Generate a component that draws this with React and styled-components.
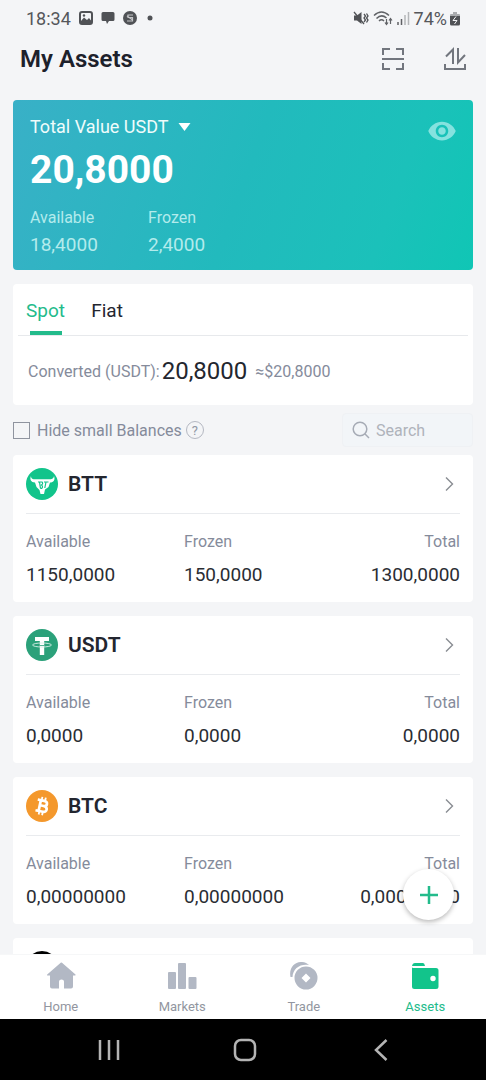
import React, { useState } from 'react';
import styled, { createGlobalStyle } from 'styled-components';

const GlobalStyle = createGlobalStyle`
  * {
    box-sizing: border-box;
  }
  body {
    margin: 0;
    background: #f4f5f7;
    font-family: Roboto, "Liberation Sans", sans-serif;
    color: #23262f;
  }
  button, input {
    font-family: inherit;
    color: inherit;
  }
  button {
    display: flex;
    align-items: center;
    padding: 0;
    border: 0;
    background: none;
    cursor: pointer;
  }
  svg {
    display: block;
    flex-shrink: 0;
  }
`;

const Screen = styled.div`
  display: flex;
  flex-direction: column;
  height: 100vh;
  overflow: hidden;
  background: #f4f5f7;
`;

const StatusBar = styled.div`
  display: flex;
  justify-content: space-between;
  align-items: center;
  height: 36px;
  padding: 0 26px;
  font-size: 18px;
  color: #55575b;
`;

const StatusGroup = styled.div`
  display: flex;
  align-items: center;
  gap: ${({ $gap }) => $gap};
`;

const Header = styled.header`
  display: flex;
  justify-content: space-between;
  align-items: center;
  height: 46px;
  padding: 0 19px 0 20px;
`;

const Title = styled.h1`
  margin: 0;
  font-size: 24px;
  line-height: 28px;
  font-weight: 600;
  color: #1d212b;
`;

const HeaderActions = styled.div`
  display: flex;
  gap: 38px;
  color: #72767e;
`;

const Content = styled.main`
  flex: 1;
  min-height: 0;
  overflow-y: auto;
  padding: 18px 13px 0;
  scrollbar-width: none;
`;

const TotalCard = styled.section`
  display: flex;
  justify-content: space-between;
  align-items: flex-start;
  height: 170px;
  padding: 15px 16px 0 17px;
  border-radius: 4px;
  background: linear-gradient(110deg, #39b0c7 0%, #22babd 50%, #1bc1ba 80%, #10c6b5 100%);
  color: #fff;
`;

const TotalLabel = styled.button`
  gap: 9px;
  font-size: 18px;
  line-height: 24px;
  && {
    color: #effcfb;
  }
`;

const TotalValue = styled.div`
  margin-top: 7px;
  font-size: 39px;
  line-height: 48px;
  font-weight: 700;
`;

const TotalStats = styled.dl`
  display: grid;
  grid-template-columns: 118px auto;
  margin: 12px 0 0;
  color: #b3ebec;
`;

const TotalStat = styled.div`
  dt {
    font-size: 16px;
    line-height: 24px;
  }
  dd {
    margin: 1px 0 0;
    font-size: 19px;
    line-height: 28px;
  }
`;

const EyeButton = styled.button`
  margin-top: 1px;
  && {
    color: #85e2df;
  }
`;

const Panel = styled.section`
  margin-top: 14px;
  height: 121px;
  padding: 0 5px;
  border-radius: 4px;
  background: #fff;
`;

const Tabs = styled.div`
  display: flex;
  gap: 26px;
  height: 52px;
  padding: 0 8px;
  border-bottom: 1px solid #e7e9ec;
`;

const Tab = styled.button`
  flex-direction: column;
  justify-content: space-between;
  padding-top: 14px;
  font-size: 19px;
  line-height: 26px;
  && {
    color: ${({ $active }) => ($active ? '#23bb8b' : '#23262f')};
  }
  &::after {
    content: '';
    width: 32px;
    height: 4px;
    background: ${({ $active }) => ($active ? '#23bb8b' : 'transparent')};
  }
`;

const Converted = styled.div`
  display: flex;
  align-items: center;
  height: 70px;
  padding: 0 10px;
  font-size: 16px;
  color: #858b9b;
`;

const ConvertedValue = styled.span`
  margin: 0 8px 0 2px;
  font-size: 24px;
  color: #23262f;
`;

const Filters = styled.div`
  display: flex;
  justify-content: space-between;
  align-items: center;
  height: 50px;
  font-size: 16px;
  color: #858b9b;
`;

const HideSmall = styled.div`
  display: flex;
  align-items: center;
  gap: 5px;
`;

const CheckLabel = styled.label`
  display: flex;
  align-items: center;
  gap: 7px;
`;

const Checkbox = styled.input`
  appearance: none;
  width: 17px;
  height: 17px;
  margin: 0;
  border: 1px solid #8f949f;
  &:checked {
    background: #23bb8b;
  }
`;

const HelpButton = styled.button`
  justify-content: center;
  width: 16px;
  height: 16px;
  border-radius: 50%;
  outline: 1px solid #b4b8c2;
  font-size: 13px;
  && {
    color: #9197a5;
  }
`;

const SearchBox = styled.label`
  display: flex;
  align-items: center;
  gap: 6px;
  width: 131px;
  height: 34px;
  padding: 0 9px;
  border: 1px solid #eff1f4;
  border-radius: 4px;
  background: #f2f5f8;
  color: #a6abb5;
`;

const SearchInput = styled.input`
  width: 100%;
  min-width: 0;
  padding: 0;
  border: 0;
  outline: 0;
  background: none;
  font-size: 16px;
  &::placeholder {
    color: #afb3bb;
    opacity: 1;
  }
`;

const CoinList = styled.div`
  display: flex;
  flex-direction: column;
  gap: 14px;
`;

const CoinCard = styled.article`
  height: 147px;
  padding: 0 13px;
  border-radius: 4px;
  background: #fff;
`;

const CoinHead = styled.button`
  width: 100%;
  height: 59px;
  gap: 10px;
  padding-right: 6px;
  border-bottom: 1px solid #e9ebee;
`;

const CoinName = styled.span`
  flex: 1;
  text-align: left;
  font-size: 21px;
  font-weight: 600;
`;

const CoinStats = styled.dl`
  display: grid;
  grid-template-columns: 158px 1fr auto;
  margin: 0;
  padding-top: 16px;
`;

const CoinStat = styled.div`
  &:last-child {
    text-align: right;
  }
  dt {
    font-size: 16px;
    line-height: 24px;
    color: #858b9b;
  }
  dd {
    margin: 7px 0 0;
    font-size: 19px;
    line-height: 28px;
    color: #2a2d33;
  }
`;

const BottomArea = styled.div`
  position: relative;
`;

const AddButton = styled.button`
  position: absolute;
  right: 32px;
  bottom: 160px;
  justify-content: center;
  width: 51px;
  height: 51px;
  border-radius: 50%;
  && {
    background: #fff;
  }
  box-shadow: 0 2px 5px rgba(0, 0, 0, 0.28);
`;

const TabBar = styled.nav`
  display: grid;
  grid-template-columns: repeat(4, 1fr);
  height: 65px;
  background: #fff;
  border-top: 1px solid #f6f7f8;
`;

const TabLink = styled.a`
  display: flex;
  flex-direction: column;
  align-items: center;
  gap: 7px;
  padding-top: 6px;
  font-size: 13px;
  line-height: 18px;
  text-decoration: none;
  color: ${({ $active }) => ($active ? '#23bb8b' : '#9296a0')};
`;

const SystemNav = styled.div`
  display: grid;
  grid-template-columns: repeat(3, 136px);
  justify-content: center;
  height: 61px;
  padding-left: 4px;
  background: #000;
  button {
    justify-content: center;
  }
`;

const BttLogo = () => (
  <svg width="32" height="32" viewBox="0 0 32 32">
    <circle cx="16" cy="16" r="16" fill="#12c48b" />
    <path
      d="M5 8C5 11.500 8 11.500 11 11.300H21C24.500 11.500 27.500 11.500 28 8C29.500 12 27.500 14.500 24 14.500L22.500 19L19 21.500L18 26H14.500L13.500 22L10.500 19L9 14.500C5 14.500 3.500 11.500 5 8Z"
      fill="#fff"
    />
    <path
      d="M12 14H16Q17.500 15.500 15.500 17Q17.500 18.500 15.500 20.500H14.500M13.500 14L14.500 20.500M18 14H22.500M20 14L18.800 20"
      fill="none"
      stroke="#12c48b"
      strokeWidth="1.200"
    />
  </svg>
);

const UsdtLogo = () => (
  <svg width="32" height="32" viewBox="0 0 32 32">
    <circle cx="16" cy="16" r="16" fill="#2ba17a" />
    <path d="M9 8H23V12H18.200V26H13.800V12H9Z" fill="#fff" />
    <ellipse cx="16" cy="16" rx="9.500" ry="2" fill="none" stroke="#d8eee6" strokeWidth="0.900" />
    <path d="M14 16.500H18" stroke="#2ba17a" strokeWidth="0.800" />
  </svg>
);

const BtcLogo = () => (
  <svg width="32" height="32" viewBox="0 0 32 32">
    <circle cx="16" cy="16" r="16" fill="#f4982c" />
    <g transform="rotate(12 16 16)" fill="none" stroke="#fff">
      <path
        d="M10.500 10.500H17C21.500 10.500 21.500 15.500 17.500 15.700H14M17.500 15.700C22.500 15.700 22.500 21.500 18 21.500H10.500M13.700 10.500V21.500"
        strokeWidth="2.700"
      />
      <path d="M14.500 7V10M18 7V10M14.500 22V25M18 22V25" strokeWidth="1.800" />
    </g>
  </svg>
);

const BlackLogo = () => (
  <svg width="32" height="32" viewBox="0 0 32 32">
    <circle cx="16" cy="16" r="16" fill="#000" />
  </svg>
);

const Chevron = () => (
  <svg width="9" height="16" viewBox="0 0 9 16" fill="none" stroke="#898c92" strokeWidth="1.400">
    <path d="M1 1.500L7.500 8L1 14.500" />
  </svg>
);

const coins = [
  { name: 'BTT', logo: <BttLogo />, available: '1150,0000', frozen: '150,0000', total: '1300,0000' },
  { name: 'USDT', logo: <UsdtLogo />, available: '0,0000', frozen: '0,0000', total: '0,0000' },
  { name: 'BTC', logo: <BtcLogo />, available: '0,00000000', frozen: '0,00000000', total: '0,00000000' },
];

const links = [
  {
    name: 'Home',
    icon: (
      <path d="M15 1.500Q15.500 1.200 16 1.700L29.500 13.500Q30 14.500 29 14.500H27V25.500Q27 27.500 25 27.500H18V20.500Q18 18.500 15.500 18.500Q13 18.500 13 20.500V27.500H6Q4 27.500 4 25.500V14.500H1.500Q0.500 14.500 1.200 13.500Z" />
    ),
  },
  {
    name: 'Markets',
    icon: (
      <>
        <rect x="1" y="11" width="8" height="17" rx="1" />
        <rect x="11" y="2" width="8" height="26" rx="1" />
        <rect x="21.500" y="16" width="8" height="12" rx="1" />
      </>
    ),
  },
  {
    name: 'Trade',
    icon: (
      <>
        <path d="M1.500 16C-0.500 7 6 0 13 1C16 1 18.500 2.500 20 4C11 2.500 4 7.500 3.500 16Z" />
        <path
          fillRule="evenodd"
          d="M17 5.500A11.500 11.500 0 1 0 17 28.500A11.500 11.500 0 1 0 17 5.500ZM17 12.500L21.500 17L17 21.500L12.500 17Z"
        />
      </>
    ),
  },
  {
    name: 'Assets',
    icon: (
      <>
        <path d="M2 5Q2.500 2 5 2H13Q14.500 2 15 5Z" />
        <path
          fillRule="evenodd"
          d="M4 7H26Q28.500 7 28.500 9.500V25.500Q28.500 28 26 28H4.500Q2 28 2 25.500V6.500Q3 7 4 7ZM23 14.800A2.700 2.700 0 1 0 23 20.200A2.700 2.700 0 1 0 23 14.800Z"
        />
      </>
    ),
  },
];

const App = () => {
  const [tab, setTab] = useState('Spot');
  const [hideSmall, setHideSmall] = useState(false);

  return (
    <Screen>
      <GlobalStyle />
      <StatusBar>
        <StatusGroup $gap="8px">
          <span>18:34</span>
          <svg width="14" height="14" viewBox="0 0 14 14">
            <rect x="1" y="1" width="12" height="12" rx="2" fill="none" stroke="#505256" strokeWidth="2" />
            <path d="M2 10L5 6.500L8 9L10 7L12 9.500V12H2Z" fill="#505256" />
            <circle cx="5" cy="4.500" r="1.200" fill="#505256" />
          </svg>
          <svg width="14" height="14" viewBox="0 0 14 14" fill="#505256">
            <path d="M2 1H12Q13.500 1 13.500 2.500V8.500Q13.500 10 12 10H8L6 13L5 10H2Q0.500 10 0.500 8.500V2.500Q0.500 1 2 1Z" />
          </svg>
          <svg width="14" height="14" viewBox="0 0 14 14">
            <circle cx="7" cy="7" r="7" fill="#505256" />
            <path d="M10 4H5V6.500H9.500V10H4M4 5L9 8.500" fill="none" stroke="#c4c5c8" strokeWidth="1.200" />
          </svg>
          <svg width="14" height="14" viewBox="0 0 14 14">
            <circle cx="5" cy="7" r="2.500" fill="#505256" />
          </svg>
        </StatusGroup>
        <StatusGroup $gap="4px">
          <svg width="16" height="14" viewBox="0 0 16 14">
            <path d="M1 4.500H4L8.500 1V13L4 9.500H1Z" fill="#505256" />
            <path
              d="M1 1L11 13M11 3L12.500 5L11 7L12.500 9L11 11M13.500 2.500L15 5L13.500 7L15 9L13.500 11.500"
              fill="none"
              stroke="#505256"
              strokeWidth="1.300"
            />
          </svg>
          <svg width="20" height="16" viewBox="0 0 20 16" fill="none" stroke="#606266" strokeWidth="1.500">
            <path d="M1 5.500Q8.500-1.500 16 5.500M3.500 8.500Q8.500 3.500 13.500 8M6 11Q8.500 8.500 11 11" />
            <path d="M13.500 9V14M12 12.500L13.500 14.500L15 12.500M17.500 14V9M16 10.500L17.500 8.500L19 10.500" strokeWidth="1.200" />
          </svg>
          <svg width="13" height="14" viewBox="0 0 13 14">
            <path d="M1 11V14M4.500 8V14" stroke="#606266" strokeWidth="1.500" />
            <path d="M8 4V14M11.500 1V14" stroke="#b4b6b9" strokeWidth="1.500" />
          </svg>
          <StatusGroup $gap="3px">
            <span>74%</span>
            <svg width="10" height="15" viewBox="0 0 10 15">
              <path d="M3 1H7V3H9Q10 3 10 4V5H0V4Q0 3 1 3H3Z" fill="#aaacaf" />
              <path d="M0 5H10V13Q10 14.500 8.500 14.500H1.500Q0 14.500 0 13Z" fill="#505256" />
              <path d="M6 5.500L3 9.500H7L4.500 13" fill="none" stroke="#f4f5f7" />
            </svg>
          </StatusGroup>
        </StatusGroup>
      </StatusBar>

      <Header>
        <Title>My Assets</Title>
        <HeaderActions>
          <button aria-label="Scan">
            <svg width="24" height="24" viewBox="0 0 24 24" fill="none" stroke="currentColor" strokeWidth="2">
              <path d="M9 2H2V8M15 2H22V8M2 16V22H9M22 16V22H15M1 12H23" />
            </svg>
          </button>
          <button aria-label="Transfer">
            <svg width="24" height="24" viewBox="0 0 24 24" fill="none" stroke="currentColor" strokeWidth="2">
              <path d="M2 17V22H22V17M3 9.500L10 2.500V17M15 1V15.500L22 8" />
            </svg>
          </button>
        </HeaderActions>
      </Header>

      <Content>
        <TotalCard>
          <div>
            <TotalLabel>
              Total Value USDT
              <svg width="13" height="8" viewBox="0 0 13 8">
                <path d="M0.500 0H12.500L6.500 8Z" fill="#fff" />
              </svg>
            </TotalLabel>
            <TotalValue>20,8000</TotalValue>
            <TotalStats>
              <TotalStat>
                <dt>Available</dt>
                <dd>18,4000</dd>
              </TotalStat>
              <TotalStat>
                <dt>Frozen</dt>
                <dd>2,4000</dd>
              </TotalStat>
            </TotalStats>
          </div>
          <EyeButton aria-label="Show balance">
            <svg width="30" height="30" viewBox="0 0 24 24" fill="currentColor">
              <path d="M12 4.500C7 4.500 2.730 7.610 1 12c1.730 4.390 6 7.500 11 7.500s9.270-3.110 11-7.500c-1.730-4.390-6-7.500-11-7.500zM12 17c-2.760 0-5-2.240-5-5s2.240-5 5-5 5 2.240 5 5-2.240 5-5 5zm0-8c-1.660 0-3 1.340-3 3s1.340 3 3 3 3-1.340 3-3-1.340-3-3-3z" />
            </svg>
          </EyeButton>
        </TotalCard>

        <Panel>
          <Tabs>
            {['Spot', 'Fiat'].map((name) => (
              <Tab key={name} $active={tab === name} onClick={() => setTab(name)}>
                {name}
              </Tab>
            ))}
          </Tabs>
          <Converted>
            Converted (USDT):
            <ConvertedValue>20,8000</ConvertedValue>
            ≈$20,8000
          </Converted>
        </Panel>

        <Filters>
          <HideSmall>
            <CheckLabel>
              <Checkbox type="checkbox" checked={hideSmall} onChange={() => setHideSmall(!hideSmall)} />
              Hide small Balances
            </CheckLabel>
            <HelpButton>?</HelpButton>
          </HideSmall>
          <SearchBox>
            <svg width="18" height="18" viewBox="0 0 18 18" fill="none" stroke="currentColor" strokeWidth="1.500">
              <circle cx="8" cy="8" r="6.800" />
              <path d="M12.800 12.800L17 17" />
            </svg>
            <SearchInput type="text" placeholder="Search" aria-label="Search" />
          </SearchBox>
        </Filters>

        <CoinList>
          {coins.map((coin) => (
            <CoinCard key={coin.name}>
              <CoinHead>
                {coin.logo}
                <CoinName>{coin.name}</CoinName>
                <Chevron />
              </CoinHead>
              <CoinStats>
                <CoinStat>
                  <dt>Available</dt>
                  <dd>{coin.available}</dd>
                </CoinStat>
                <CoinStat>
                  <dt>Frozen</dt>
                  <dd>{coin.frozen}</dd>
                </CoinStat>
                <CoinStat>
                  <dt>Total</dt>
                  <dd>{coin.total}</dd>
                </CoinStat>
              </CoinStats>
            </CoinCard>
          ))}
          <CoinCard>
            <CoinHead aria-label="Next coin">
              <BlackLogo />
            </CoinHead>
          </CoinCard>
        </CoinList>
      </Content>

      <BottomArea>
        <AddButton aria-label="Add">
          <svg width="20" height="20" viewBox="0 0 20 20" stroke="#23bb8b" strokeWidth="2.500">
            <path d="M10 1V19M1 10H19" />
          </svg>
        </AddButton>
        <TabBar>
          {links.map((link) => (
            <TabLink key={link.name} href="#" $active={link.name === 'Assets'}>
              <svg width="30" height="30" viewBox="0 0 30 30" fill={link.name === 'Assets' ? '#12c48b' : '#b2b8c4'}>
                {link.icon}
              </svg>
              {link.name}
            </TabLink>
          ))}
        </TabBar>
        <SystemNav>
          <button aria-label="Recents">
            <svg width="22" height="22" viewBox="0 0 22 22" stroke="#b4b4b4" strokeWidth="2.500">
              <path d="M2 1V21M11 1V21M20 1V21" />
            </svg>
          </button>
          <button aria-label="Home screen">
            <svg width="24" height="24" viewBox="0 0 24 24" fill="none" stroke="#b4b4b4" strokeWidth="2.500">
              <rect x="2" y="2" width="20" height="20" rx="6" />
            </svg>
          </button>
          <button aria-label="Back">
            <svg width="14" height="22" viewBox="0 0 14 22" fill="none" stroke="#b4b4b4" strokeWidth="2.500">
              <path d="M12.500 1L2 11L12.500 21" />
            </svg>
          </button>
        </SystemNav>
      </BottomArea>
    </Screen>
  );
};

export default App;
